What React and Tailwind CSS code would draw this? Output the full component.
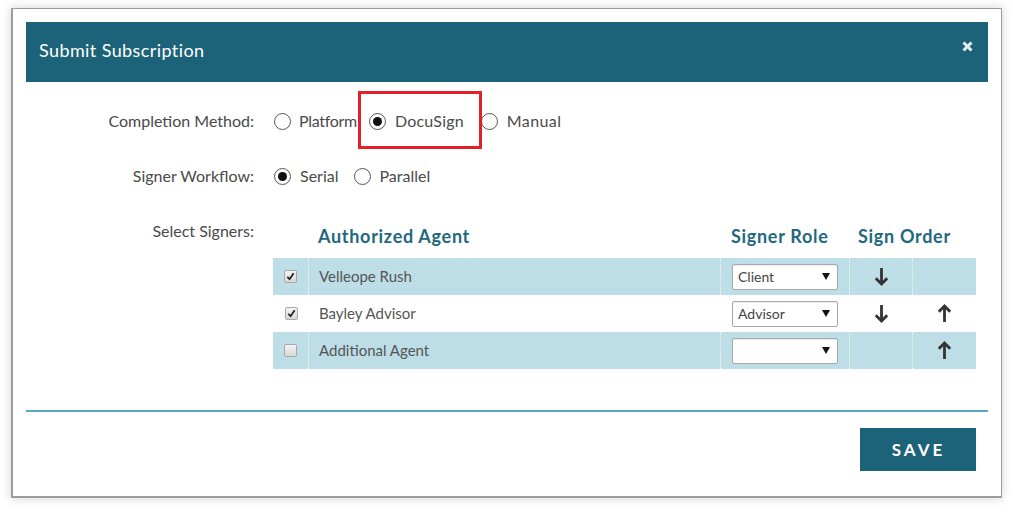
import React from "react";

const Radio = ({ checked }) => (
  <span className="inline-flex w-[17px] h-[17px] rounded-full border-[1.5px] border-[#555] bg-white items-center justify-center shrink-0">
    {checked && <span className="w-[9px] h-[9px] rounded-full bg-[#111]" />}
  </span>
);

const Check = ({ checked }) => (
  <span className="inline-flex w-[13px] h-[13px] rounded-[2px] border border-[#a8a8a8] bg-gradient-to-b from-[#f4f4f4] to-[#d8d8d8] items-center justify-center">
    {checked && (
      <svg width="9" height="9" viewBox="0 0 10 10">
        <path d="M1.5 5.5 L4 8 L8.5 1.5" fill="none" stroke="#222" strokeWidth="2" />
      </svg>
    )}
  </span>
);

const Arrow = ({ dir }) => (
  <svg width="15" height="19" viewBox="0 0 15 19" className={dir === "up" ? "rotate-180" : ""}>
    <path d="M7.5 1 V17" stroke="#333" strokeWidth="2.8" fill="none" />
    <path d="M1.8 11.3 L7.5 17 L13.2 11.3" stroke="#333" strokeWidth="2.8" fill="none" />
  </svg>
);

const Select = ({ value }) => (
  <div className="w-[106px] h-[26px] border border-[#a9a9a9] bg-white rounded-[2px] flex items-center justify-between pl-[5px] pr-[7px] text-[14px] text-[#444] shadow-[inset_0_1px_1px_rgba(0,0,0,0.08)]">
    <span>{value}</span>
    <svg width="8" height="7" viewBox="0 0 8 7"><path d="M0 0 H8 L4 7 Z" fill="#111" /></svg>
  </div>
);

const rows = [
  { name: "Velleope Rush", checked: true, role: "Client", down: true, up: false, blue: true },
  { name: "Bayley Advisor", checked: true, role: "Advisor", down: true, up: true, blue: false },
  { name: "Additional Agent", checked: false, role: "", down: false, up: true, blue: true },
];

export default function App() {
  return (
    <div className="w-[1013px] h-[512px] bg-white pt-[8px] pl-[11px]" style={{ fontFamily: "Lato, 'Liberation Sans', sans-serif" }}>
      <div className="relative w-[991px] h-[490px] border border-[#9c9c9c] border-l-2 border-b-2 shadow-[0_0_10px_rgba(0,0,0,0.18)] bg-white px-[13px] pt-[13px]">
        <div className="h-[60px] bg-[#1c6379] flex items-center justify-between pl-[13px] pr-[15px]">
          <span className="text-white text-[18px] tracking-[0.4px] mb-[4px]">Submit Subscription</span>
          <svg width="11" height="11" viewBox="0 0 11 11" className="mb-[12px]"><path d="M1.5 1.5 L9.5 9.5 M9.5 1.5 L1.5 9.5" stroke="#e6eef1" strokeWidth="3" /></svg>
        </div>

        <div className="pt-[27px] text-[#4a4a4a] text-[16px]">
          <div className="flex items-center h-[24px]">
            <div className="w-[228px] text-right">Completion Method:</div>
            <div className="ml-[20px] flex items-center">
              <Radio />
              <span className="ml-[8px] tracking-[-0.3px]">Platform</span>
              <span className="ml-[12px] inline-flex"><Radio checked /></span>
              <span className="ml-[9px] tracking-[0.2px]">DocuSign</span>
              <span className="ml-[17px] inline-flex"><Radio /></span>
              <span className="ml-[9px] tracking-[0.4px]">Manual</span>
            </div>
          </div>

          <div className="flex items-center h-[24px] mt-[31px]">
            <div className="w-[228px] text-right">Signer Workflow:</div>
            <div className="ml-[20px] flex items-center">
              <Radio checked />
              <span className="ml-[9px]">Serial</span>
              <span className="ml-[16px] inline-flex"><Radio /></span>
              <span className="ml-[8px]">Parallel</span>
            </div>
          </div>

          <div className="flex mt-[33px]">
            <div className="w-[228px] text-right leading-[20px]">Select Signers:</div>
            <div className="ml-[19px] w-[703px]">
              <div className="flex h-[37px] items-start pt-[5px] leading-[20px] text-[18px] font-bold tracking-[0.7px] text-[#1f6880]">
                <div className="w-[36px]" />
                <div className="w-[412px] pl-[9px]">Authorized Agent</div>
                <div className="w-[129px] pl-[10px]">Signer Role</div>
                <div className="w-[126px] pl-[8px]">Sign Order</div>
              </div>
              {rows.map((r, i) => (
                <div key={i} className={`flex h-[37px] text-[15px] text-[#555] ${r.blue ? "bg-[#bddde7]" : "bg-white"}`}>
                  <div className={`w-[36px] flex items-center justify-center ${r.blue ? "border-r border-dotted border-white" : ""}`}>
                    <Check checked={r.checked} />
                  </div>
                  <div className={`w-[412px] flex items-center pl-[10px] ${r.blue ? "border-r border-dotted border-white" : ""}`}>{r.name}</div>
                  <div className={`w-[129px] flex items-center pl-[11px] ${r.blue ? "border-r border-dotted border-white" : ""}`}>
                    <Select value={r.role} />
                  </div>
                  <div className={`w-[63px] flex items-center justify-center ${r.blue ? "border-r border-dotted border-white" : ""}`}>
                    {r.down && <Arrow dir="down" />}
                  </div>
                  <div className="w-[63px] flex items-center justify-center">
                    {r.up && <Arrow dir="up" />}
                  </div>
                </div>
              ))}
            </div>
          </div>
        </div>

        <div className="mt-[41px] h-[2px] bg-[#5ba6c0]" />
        <div className="flex justify-end mt-[16px] pr-[12px]">
          <button className="w-[116px] h-[43px] bg-[#1c6379] text-white font-bold text-[17px] tracking-[3px] pl-[1px]">SAVE</button>
        </div>

        <div className="absolute left-[345px] top-[82px] w-[124px] h-[58px] border-[3px] border-[#e3202a]" />
      </div>
    </div>
  );
}
